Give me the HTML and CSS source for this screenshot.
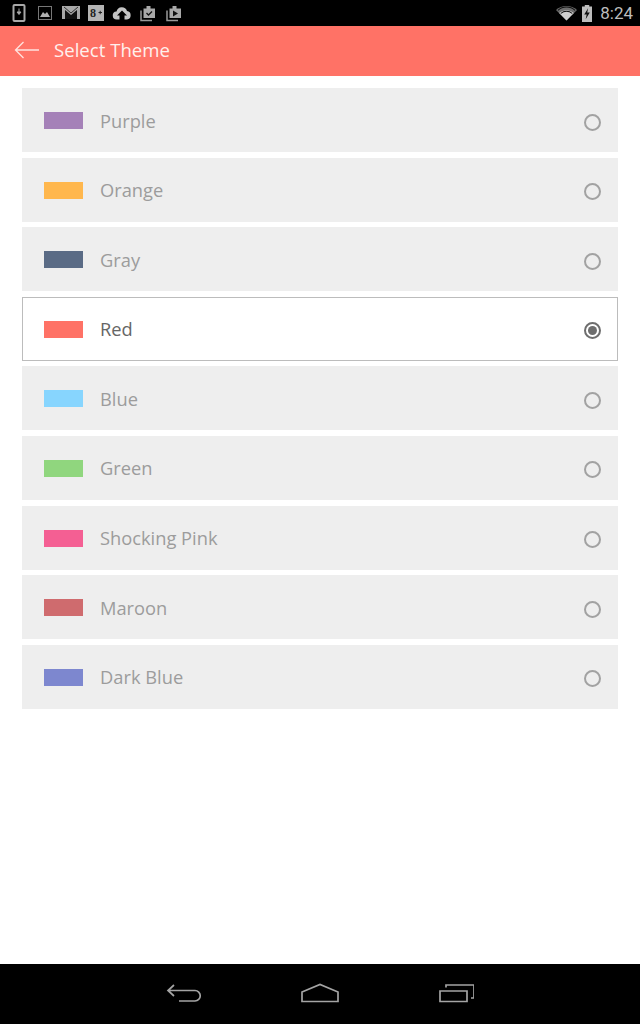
FILE: index.html
```html
<!DOCTYPE html>
<html lang="en">
<head>
<meta charset="utf-8">
<title>Select Theme</title>
<link rel="stylesheet" href="styles.css">
</head>
<body>
<div class="screen">
  <div class="statusbar">
    <div class="status-group">
      <svg class="ic ic-phone" width="14" height="18" viewBox="0 0 14 18"><rect x="1.500" y="1" width="11" height="16" rx="1" fill="none" stroke="#a8a8a8" stroke-width="2"/><path d="M7 4.500v5M5 8l2 2.500 2-2.500z" stroke="#a8a8a8" fill="#a8a8a8"/></svg>
      <svg class="ic ic-pic" width="14" height="14" viewBox="0 0 14 14"><rect x=".5" y=".5" width="13" height="13" fill="none" stroke="#777" /><path d="M2 11l3-5 2 2 2-2 3 5z" fill="#b0b0b0"/></svg>
      <svg class="ic ic-mail" width="18" height="14" viewBox="0 0 18 14"><path d="M0 0h18v13H0z" fill="#a8a8a8"/><path d="M3 13V4l6 5 6-5v9z" fill="#111"/><path d="M2 1l7 6 7-6" fill="none" stroke="#111" stroke-width=".8"/></svg>
      <svg class="ic ic-gplus" width="16" height="16" viewBox="0 0 16 16"><rect width="16" height="16" fill="#b4b4b4"/><text x="2" y="12" class="gplus">8</text><path d="M10.500 7.500h3.500M12.200 5.800v3.400" stroke="#222"/></svg>
      <svg class="ic ic-cloud" width="20" height="14" viewBox="0 0 20 14"><path d="M5 13.500a4 4 0 0 1-.5-8A5.500 5.500 0 0 1 15 5a4.300 4.300 0 0 1 0 8.500h-2.500V9.500h2.500L10 4.500 5 9.500h2.500v4z" fill="#c4c4c4"/></svg>
      <svg class="ic ic-bag" width="18" height="17" viewBox="0 0 18 17"><path d="M2 5.500v10h11" fill="none" stroke="#999" stroke-width="1.500"/><path d="M4.500 3.500h3V1h4v2.500h4.500V13H4.500z" fill="#a8a8a8"/><path d="M7.500 8l2 2 3.500-3.500" fill="none" stroke="#111" stroke-width="1.300"/></svg>
      <svg class="ic ic-bag2" width="18" height="17" viewBox="0 0 18 17"><path d="M2 5.500v10h11" fill="none" stroke="#999" stroke-width="1.500"/><path d="M4.500 3.500h3V1h4v2.500h4.500V13H4.500z" fill="#a8a8a8"/><path d="M8 5.500l5 3-5 3z" fill="#111"/></svg>
    </div>
    <div class="status-group status-right">
      <svg class="ic" width="21" height="15" viewBox="0 0 20 15" preserveAspectRatio="none"><path d="M10 14.500L0 4a14.500 14.500 0 0 1 20 0z" fill="#6e6e6e"/><path d="M10 14.500L3 7a10 10 0 0 1 14 0z" fill="#d0d0d0"/><path d="M1.800 4.300a12 12 0 0 1 16.400 0M4.500 7.500a8 8 0 0 1 11 0" fill="none" stroke="#111" stroke-width="1"/></svg>
      <svg class="ic ic-batt" width="10" height="17" viewBox="0 0 9 16" preserveAspectRatio="none"><path d="M2.500 0h4v1.500H9V16H0V1.500h2.500z" fill="#bdbdbd"/><path d="M5.500 3L2 9h2.200L3.300 13.500 7 7H4.700z" fill="#111"/></svg>
      <span class="clock">8:24</span>
    </div>
  </div>

  <header class="appbar">
    <svg class="back" width="26" height="18" viewBox="0 0 26 18"><path d="M25 9H1.500M9.500 1L1.500 9l8 8" fill="none" stroke="#ffe3df" stroke-width="1.300"/></svg>
    <h1 class="title">Select Theme</h1>
  </header>

  <main class="list">
    <div class="row"><span class="swatch purple"></span><span class="name">Purple</span><span class="radio"></span></div>
    <div class="row"><span class="swatch orange"></span><span class="name">Orange</span><span class="radio"></span></div>
    <div class="row"><span class="swatch gray"></span><span class="name">Gray</span><span class="radio"></span></div>
    <div class="row selected"><span class="swatch red"></span><span class="name">Red</span><span class="radio"></span></div>
    <div class="row"><span class="swatch blue"></span><span class="name">Blue</span><span class="radio"></span></div>
    <div class="row"><span class="swatch green"></span><span class="name">Green</span><span class="radio"></span></div>
    <div class="row"><span class="swatch pink"></span><span class="name">Shocking Pink</span><span class="radio"></span></div>
    <div class="row"><span class="swatch maroon"></span><span class="name">Maroon</span><span class="radio"></span></div>
    <div class="row"><span class="swatch darkblue"></span><span class="name">Dark Blue</span><span class="radio"></span></div>
  </main>

  <nav class="navbar">
    <svg width="36" height="20" viewBox="0 0 36 20"><path d="M8 2L2 7.500l6 5.500M2 7.500h27a4.500 4.500 0 0 1 0 10.500H13" fill="none" stroke="#a4a4a4" stroke-width="1.700"/></svg>
    <svg width="40" height="20" viewBox="0 0 40 20"><path d="M2 9L20 1.500 38 9v9.500H2z" fill="none" stroke="#a4a4a4" stroke-width="1.700"/></svg>
    <svg width="36" height="20" viewBox="0 0 36 20"><path d="M2 8h27v10.500H2zM8 4.500V2h28v13h-3" fill="none" stroke="#a4a4a4" stroke-width="1.700"/></svg>
  </nav>
</div>
</body>
</html>
```

FILE: styles.css
```css
* { box-sizing: border-box; }
html, body { margin: 0; padding: 0; background: #fff; }
body { font-family: "Open Sans", "Noto Sans", sans-serif; }
.screen { width: 640px; height: 1024px; display: flex; flex-direction: column; overflow: hidden; }

.statusbar { height: 26px; background: #000; display: flex; justify-content: space-between; align-items: center; padding: 0 7px 0 12px; flex: none; }
.status-group { display: flex; align-items: center; gap: 8px; }
.status-right { gap: 5px; }
.ic { display: block; flex: none; }
.ic-pic { margin-left: 4px; }
.ic-mail { margin-left: 2px; }
.ic-bag { margin-left: -1px; }
.gplus { font: bold 12px "Liberation Serif", serif; fill: #222; }
.clock { color: #bdbdbd; font: 17px "Roboto", sans-serif; margin-left: 3px; }

.appbar { height: 50px; background: #ff7266; display: flex; align-items: center; padding: 0 0 4px 14px; flex: none; }
.back { display: block; margin-right: 14px; margin-top: 2px; }
.title { margin: 0; font-size: 18.600px; font-weight: 400; color: #fff0ed; }

.list { flex: 1; padding: 12px 22px 0; display: flex; flex-direction: column; gap: 5.600px; }
.row { height: 64px; background: #eeeeee; display: flex; align-items: center; padding: 0 17px 0 22px; }
.row.selected { background: #fff; border: 1px solid #bcbcbc; padding: 0 16px 0 21px; }
.swatch { width: 39px; height: 17px; flex: none; margin-right: 17px; margin-top: 1px; }
.name { flex: 1; font-size: 18.300px; color: #9c9c9c; }
.selected .name { color: #666; }
.radio { width: 17px; height: 17px; border-radius: 50%; border: 2px solid #a2a2a2; flex: none; margin-top: 4px; display: flex; align-items: center; justify-content: center; }
.selected .radio { border-color: #6e6e6e; }
.selected .radio::after { content: ""; width: 9px; height: 9px; border-radius: 50%; background: #6e6e6e; }

.purple { background: #a581b8; }
.orange { background: #ffb74d; }
.gray { background: #5a6b85; }
.red { background: #ff7266; }
.blue { background: #87d5fe; }
.green { background: #90d67e; }
.pink { background: #f45f93; }
.maroon { background: #cf6b6e; }
.darkblue { background: #7d87cf; }

.navbar { height: 60px; background: #000; display: flex; align-items: center; justify-content: center; gap: 98px; padding-bottom: 2px; flex: none; }
.navbar svg { display: block; }
```
